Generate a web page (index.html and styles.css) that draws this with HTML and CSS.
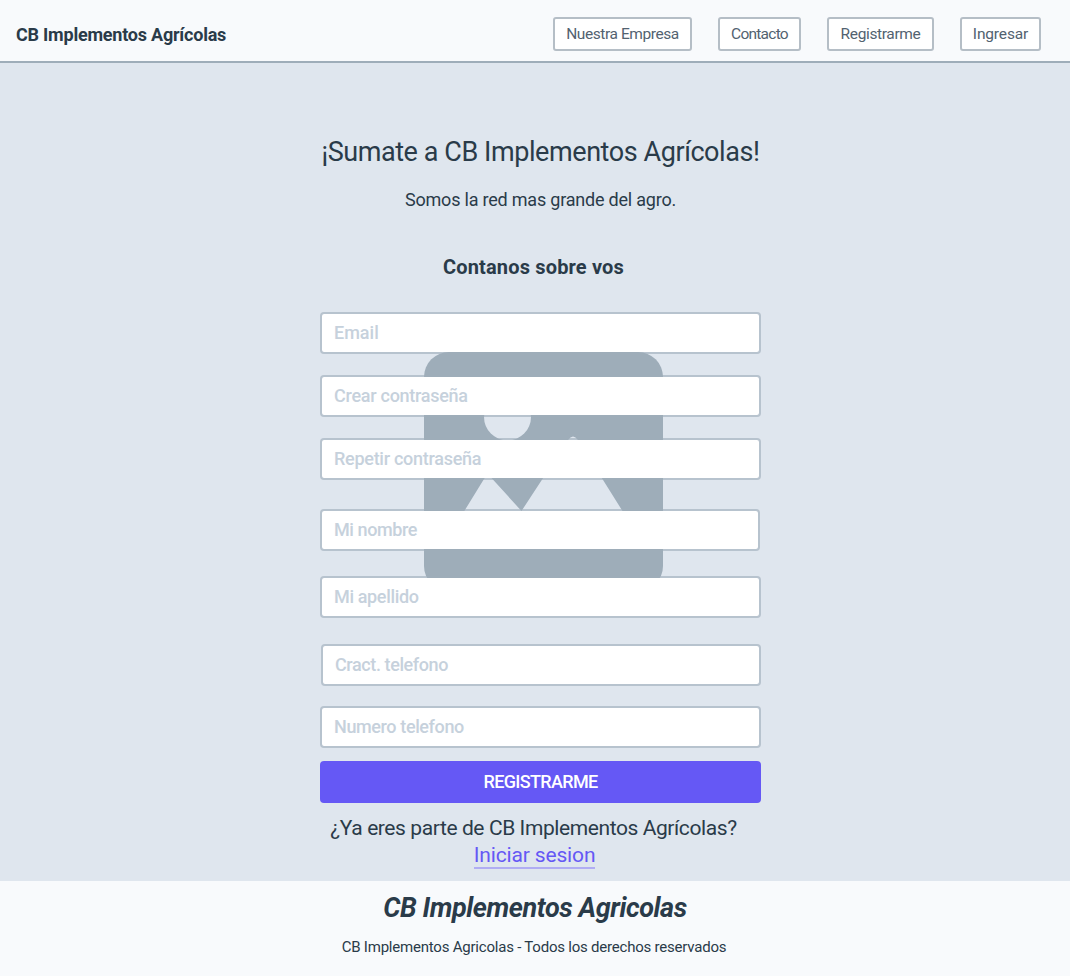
FILE: index.html
```html
<!DOCTYPE html>
<html lang="es">
<head>
<meta charset="utf-8">
<title>CB Implementos Agrícolas</title>
<link rel="stylesheet" href="styles.css">
</head>
<body>
<header class="header">
  <span class="brand">CB Implementos Agrícolas</span>
  <nav class="nav">
    <a class="nav-link nav-company">Nuestra Empresa</a>
    <a class="nav-link nav-contact">Contacto</a>
    <a class="nav-link nav-register">Registrarme</a>
    <a class="nav-link nav-login">Ingresar</a>
  </nav>
</header>
<main class="main">
  <svg class="picture" viewBox="0 0 239 239" aria-hidden="true">
    <rect width="239" height="239" rx="25" fill="#9eadb9"/>
    <circle cx="83.5" cy="65" r="23.5" fill="#dfe6ee"/>
    <path d="M30.500 175 L60 127 Q63 122 67.500 126 L97.500 159 L144 88 Q149 81 154 88 L208.500 175 Z" fill="#dfe6ee"/>
  </svg>
  <h1 class="title">¡Sumate a CB Implementos Agrícolas!</h1>
  <p class="subtitle">Somos la red mas grande del agro.</p>
  <h2 class="heading">Contanos sobre vos</h2>
  <form class="form">
    <input class="field email" placeholder="Email">
    <input class="field create" placeholder="Crear contraseña">
    <input class="field repeat" placeholder="Repetir contraseña">
    <input class="field name" placeholder="Mi nombre">
    <input class="field surname" placeholder="Mi apellido">
    <input class="field area" placeholder="Cract. telefono">
    <input class="field phone" placeholder="Numero telefono">
    <button class="submit" type="button">REGISTRARME</button>
  </form>
  <p class="question">¿Ya eres parte de CB Implementos Agrícolas?</p>
  <a class="login">Iniciar sesion</a>
</main>
<footer class="footer">
  <div class="footer-brand">CB Implementos Agricolas</div>
  <div class="rights">CB Implementos Agricolas - Todos los derechos reservados</div>
</footer>
</body>
</html>
```
FILE: styles.css
```css
* { box-sizing: border-box; }
body {
  margin: 0;
  height: 976px;
  display: flex;
  flex-direction: column;
  font-family: Roboto, "Liberation Sans", sans-serif;
  color: #2a3b49;
  background: #f8fafc;
}
h1, h2, p { margin: 0; font-weight: 400; }
.header {
  height: 63px;
  flex: none;
  display: flex;
  align-items: center;
  justify-content: space-between;
  padding: 7px 29px 0 16px;
  border-bottom: 2px solid #9eadb9;
}
.brand { font-size: 18px; font-weight: 700; letter-spacing: -.22px; white-space: nowrap; }
.nav { display: flex; gap: 26px; }
.nav-link {
  height: 34px;
  line-height: 31px;
  border: 2px solid #b5bec6;
  border-radius: 3px;
  background: #fff;
  color: #526270;
  font-size: 15.5px;
  text-align: center;
  white-space: nowrap;
}
.nav-company { width: 139px; letter-spacing: -.43px; }
.nav-contact { width: 83px; letter-spacing: -.75px; }
.nav-register { width: 107px; letter-spacing: -.36px; }
.nav-login { width: 81px; letter-spacing: -.15px; }
.main {
  position: relative;
  z-index: 0;
  height: 818px;
  flex: none;
  display: flex;
  flex-direction: column;
  align-items: center;
  background: #dfe6ee;
  white-space: nowrap;
}
.picture {
  position: absolute;
  z-index: -1;
  left: 424px;
  top: 289px;
  width: 239px;
  height: 239px;
}
.title { margin: 71px 0 0 11px; font-size: 27px; line-height: 36px; letter-spacing: -.43px; }
.subtitle { margin: 18px 0 0 11px; font-size: 18px; line-height: 24px; letter-spacing: -.21px; }
.heading { margin: 41px 0 0 -3px; font-size: 20px; line-height: 28px; font-weight: 700; letter-spacing: .16px; }
.form { width: 441px; margin: 31px 0 0 11px; display: flex; flex-direction: column; }
.field {
  width: 441px;
  height: 42px;
  padding: 0 12px 2px;
  border: 2px solid rgba(158, 173, 185, .62);
  border-radius: 4px;
  background: #fff;
  background-clip: padding-box;
  font: 500 18px Roboto, "Liberation Sans", sans-serif;
}
.field::placeholder { color: #c6d1dc; opacity: 1; }
.create, .repeat { margin-top: 21px; letter-spacing: -.27px; }
.name { margin-top: 29px; width: 440px; letter-spacing: -.4px; }
.surname { margin-top: 25px; letter-spacing: -.35px; }
.area { margin: 26px 0 0 1px; width: 440px; letter-spacing: -.4px; }
.phone { margin-top: 20px; letter-spacing: -.38px; }
.submit {
  height: 42px;
  margin-top: 13px;
  padding: 0 0 2px;
  border: 0;
  border-radius: 4px;
  background: #6558f5;
  color: #fff;
  font: 500 18px Roboto, "Liberation Sans", sans-serif;
  letter-spacing: -.65px;
}
.question { margin: 12px 0 0 -3px; font-size: 21px; line-height: 26px; letter-spacing: -.41px; }
.login {
  margin: 1px 0 0 -1px;
  height: 27px;
  font-size: 21px;
  line-height: 26px;
  letter-spacing: -.15px;
  color: #6558f5;
  border-bottom: 2px solid #b0adf3;
}
.footer { flex: 1; display: flex; flex-direction: column; align-items: center; white-space: nowrap; }
.footer-brand { margin-top: 10px; font-size: 27px; line-height: 34px; font-weight: 700; font-style: italic; letter-spacing: -.42px; }
.rights { margin: 12px 0 0 -2px; font-size: 15px; line-height: 20px; letter-spacing: -.215px; }
```
